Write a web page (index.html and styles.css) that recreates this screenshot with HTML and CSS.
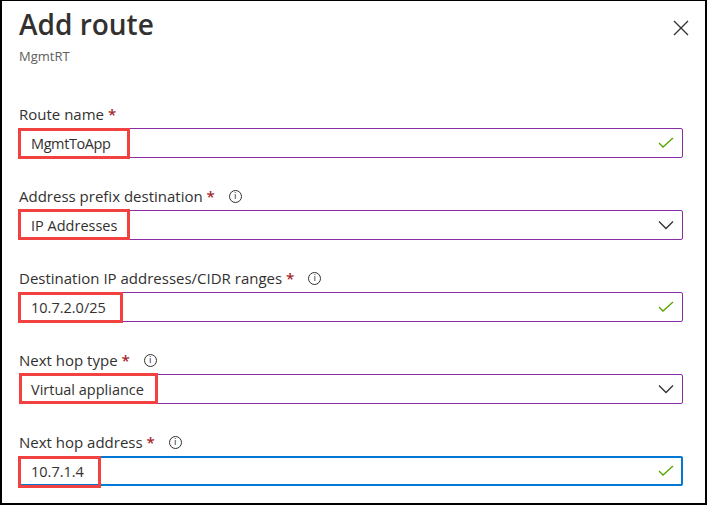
FILE: index.html
```html
<!DOCTYPE html>
<html lang="en">
<head>
<meta charset="utf-8">
<title>Add route</title>
<link rel="stylesheet" href="styles.css">
</head>
<body>
<div class="panel">
  <header class="header">
    <div class="titles">
      <h1 class="title">Add route</h1>
      <div class="subtitle">MgmtRT</div>
    </div>
    <button class="close" aria-label="Close">
      <svg width="16" height="16" viewBox="0 0 16 16"><path d="M1 1 L15 15 M15 1 L1 15" stroke="#323130" stroke-width="1.3" fill="none"/></svg>
    </button>
  </header>

  <div class="field">
    <div class="label">Route name <span class="req">*</span></div>
    <div class="input purple">
      <span class="value tight">MgmtToApp</span>
      <svg class="icon" width="16" height="12" viewBox="0 0 16 12"><path d="M1 6 L5 10 L15 1" stroke="#57a300" stroke-width="1.3" fill="none"/></svg>
      <span class="mark mark-1"></span>
    </div>
  </div>

  <div class="field">
    <div class="label">Address prefix destination <span class="req">*</span><span class="info">i</span></div>
    <div class="input purple">
      <span class="value">IP Addresses</span>
      <svg class="icon" width="16" height="10" viewBox="0 0 16 10"><path d="M1 1.5 L8 8.5 L15 1.5" stroke="#323130" stroke-width="1.3" fill="none"/></svg>
      <span class="mark mark-2"></span>
    </div>
  </div>

  <div class="field">
    <div class="label">Destination IP addresses/CIDR ranges <span class="req">*</span><span class="info">i</span></div>
    <div class="input purple">
      <span class="value">10.7.2.0/25</span>
      <svg class="icon" width="16" height="12" viewBox="0 0 16 12"><path d="M1 6 L5 10 L15 1" stroke="#57a300" stroke-width="1.3" fill="none"/></svg>
      <span class="mark mark-3"></span>
    </div>
  </div>

  <div class="field">
    <div class="label">Next hop type <span class="req">*</span><span class="info">i</span></div>
    <div class="input purple">
      <span class="value">Virtual appliance</span>
      <svg class="icon" width="16" height="10" viewBox="0 0 16 10"><path d="M1 1.5 L8 8.5 L15 1.5" stroke="#323130" stroke-width="1.3" fill="none"/></svg>
      <span class="mark mark-4"></span>
    </div>
  </div>

  <div class="field">
    <div class="label">Next hop address <span class="req">*</span><span class="info">i</span></div>
    <div class="input blue">
      <span class="value">10.7.1.4</span>
      <svg class="icon" width="16" height="12" viewBox="0 0 16 12"><path d="M1 6 L5 10 L15 1" stroke="#57a300" stroke-width="1.3" fill="none"/></svg>
      <span class="mark mark-5"></span>
    </div>
  </div>
</div>
</body>
</html>
```

FILE: styles.css
```css
* { box-sizing: border-box; }
html, body { margin: 0; padding: 0; background: #fff; }
body {
  font-family: "Open Sans", "Noto Sans", sans-serif;
  color: #323130;
}
.panel {
  width: 707px;
  height: 505px;
  border: 2px solid #000;
  border-top-width: 1px;
  padding: 5px 22px 0 17px;
  overflow: hidden;
}
.header {
  display: flex;
  justify-content: space-between;
  align-items: flex-start;
}
.title {
  margin: 0;
  font-size: 28px;
  font-weight: 600;
  line-height: 36px;
  color: #323130;
}
.subtitle {
  margin-top: 5px;
  font-size: 13px;
  line-height: 18px;
  color: #605e5c;
}
.close {
  border: 0;
  background: none;
  padding: 0;
  margin: 14px -6px 0 0;
  width: 16px;
  height: 16px;
  display: flex;
}
.field { margin-top: 28px; }
.header + .field { margin-top: 39px; }
.label {
  font-size: 15px;
  line-height: 20px;
  display: flex;
  align-items: center;
  white-space: pre;
}
.req { color: #a4262c; font-weight: 600; }
.info {
  margin-left: 14px;
  width: 13px;
  height: 13px;
  border: 1px solid #323130;
  border-radius: 50%;
  font-size: 9px;
  line-height: 11px;
  text-align: center;
  font-family: "DejaVu Sans", sans-serif;
}
.input {
  position: relative;
  margin-top: 4px;
  height: 30px;
  border: 1px solid #8a2da5;
  border-radius: 2px;
  display: flex;
  align-items: center;
  justify-content: space-between;
  padding: 0 8px 0 11px;
  font-size: 14.5px;
}
.input.blue { border: 2px solid #0078d4; padding-left: 10px; padding-right: 7px; }
.value { color: #323130; }
.value.tight { letter-spacing: -0.4px; }
.mark {
  position: absolute;
  top: -1px;
  left: -2px;
  height: 31px;
  border: 3px solid #f24141;
}
.mark-1 { width: 112px; }
.mark-2 { width: 112px; top: -2px; }
.mark-3 { width: 105px; }
.mark-4 { width: 139px; left: -1px; top: -2px; }
.mark-5 { width: 83px; left: -3px; top: -2px; height: 32px; }
```
